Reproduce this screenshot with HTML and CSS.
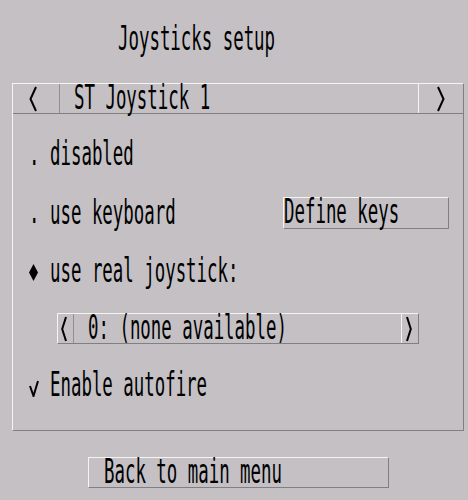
FILE: index.html
```html
<!DOCTYPE html>
<html>
<head>
<meta charset="utf-8">
<title>Joysticks setup</title>
<link rel="stylesheet" href="styles.css">
</head>
<body>
<div class="screen">
  <div class="title"><span class="t">Joysticks setup</span></div>

  <div class="panel">
    <div class="hdr">
      <div class="cell arrow-l">
        <svg class="arr" width="8" height="26" viewBox="0 0 8 26"><polyline points="7,1 1.5,13 7,25" fill="none" stroke="#000" stroke-width="2"/></svg>
      </div>
      <div class="hdr-text"><span class="t">ST Joystick 1</span></div>
      <div class="cell arrow-r">
        <svg class="arr" width="8" height="26" viewBox="0 0 8 26"><polyline points="1,1 6.5,13 1,25" fill="none" stroke="#000" stroke-width="2"/></svg>
      </div>
    </div>

    <div class="body">
      <div class="row r1">
        <span class="mark"><span class="t">.</span></span>
        <span class="t">disabled</span>
      </div>

      <div class="row r2">
        <span class="mark"><span class="t">.</span></span>
        <span class="label"><span class="t">use keyboard</span></span>
        <div class="btn define"><span class="t">Define keys</span></div>
      </div>

      <div class="row r3">
        <span class="mark">
          <svg width="9" height="17" viewBox="0 0 9 17"><polygon points="4.5,0 9,8.5 4.5,17 0,8.5" fill="#000"/></svg>
        </span>
        <span class="t">use real joystick:</span>
      </div>

      <div class="selector">
        <div class="sel-l">
          <svg width="6" height="26" viewBox="0 0 6 26"><polyline points="5,1 1.2,13 5,25" fill="none" stroke="#000" stroke-width="2"/></svg>
        </div>
        <div class="sel-text"><span class="t">0: (none available)</span></div>
        <div class="sel-r">
          <svg width="6" height="26" viewBox="0 0 6 26"><polyline points="1,1 4.8,13 1,25" fill="none" stroke="#000" stroke-width="2"/></svg>
        </div>
      </div>

      <div class="row r5">
        <span class="mark">
          <svg class="check" width="10" height="17" viewBox="0 0 10 17"><polyline points="1,6 4.5,16 9,1" fill="none" stroke="#000" stroke-width="2"/></svg>
        </span>
        <span class="t">Enable autofire</span>
      </div>
    </div>
  </div>

  <div class="btn back"><span class="t">Back to main menu</span></div>
</div>
</body>
</html>
```

FILE: styles.css
```css
html, body {
  margin: 0;
  padding: 0;
  background: #c4c0c4;
}

.screen {
  width: 468px;
  height: 500px;
  padding-top: 25px;
  box-sizing: border-box;
  font-family: "DejaVu Sans Mono", "Liberation Mono", monospace;
  font-size: 17.4px;
  color: #000;
}

.t {
  display: inline-block;
  line-height: 17.4px;
  white-space: pre;
  transform: scaleY(1.9);
}

.title {
  height: 30px;
  padding-left: 118px;
  display: flex;
  align-items: center;
}

.panel {
  margin-top: 28px;
  margin-left: 12px;
  width: 452px;
  height: 348px;
  box-sizing: border-box;
  border-top: 1px solid #f4f4f4;
  border-left: 1px solid #f4f4f4;
  border-right: 1px solid #808080;
  border-bottom: 1px solid #808080;
}

.hdr {
  display: flex;
  height: 30px;
  box-sizing: border-box;
  border-bottom: 1px solid #808080;
}

.cell {
  display: flex;
  align-items: center;
  box-sizing: border-box;
}

.arrow-l {
  width: 47px;
  padding-left: 16px;
  border-right: 1px solid #909090;
}

.arrow-r {
  width: 45px;
  padding-left: 18px;
  border-left: 1px solid #f4f4f4;
}

.hdr-text {
  flex: 1;
  display: flex;
  align-items: center;
  padding-left: 14px;
}

.body {
  padding: 26px 14px 0 16px;
}

.row {
  display: flex;
  align-items: center;
  height: 30px;
}

.mark {
  width: 21px;
  display: flex;
  align-items: center;
}

.r2 {
  margin-top: 27px;
  height: 32px;
}

.label {
  flex: 1;
}

.r3 {
  margin-top: 28px;
}

.btn {
  box-sizing: border-box;
  display: flex;
  align-items: center;
  border-top: 1px solid #f4f4f4;
  border-left: 1px solid #f4f4f4;
  border-right: 1px solid #808080;
  border-bottom: 1px solid #808080;
}

.define {
  width: 166px;
  height: 32px;
  padding-left: 0;
}

.selector {
  margin-top: 26px;
  margin-left: 28px;
  width: 362px;
  height: 31px;
  box-sizing: border-box;
  display: flex;
  border-top: 1px solid #f4f4f4;
  border-left: 1px solid #f4f4f4;
  border-right: 1px solid #808080;
  border-bottom: 1px solid #808080;
}

.sel-l {
  width: 16px;
  box-sizing: border-box;
  padding-left: 3px;
  display: flex;
  align-items: center;
  border-right: 1px solid #909090;
}

.sel-text {
  flex: 1;
  display: flex;
  align-items: center;
  padding-left: 14px;
}

.sel-r {
  width: 17px;
  box-sizing: border-box;
  padding-left: 4px;
  display: flex;
  align-items: center;
  border-left: 1px solid #f4f4f4;
}

.r5 {
  margin-top: 27px;
}

.check {
  margin-top: 4px;
}

.back {
  margin-top: 26px;
  margin-left: 88px;
  width: 301px;
  height: 31px;
  padding-left: 15px;
}
```
